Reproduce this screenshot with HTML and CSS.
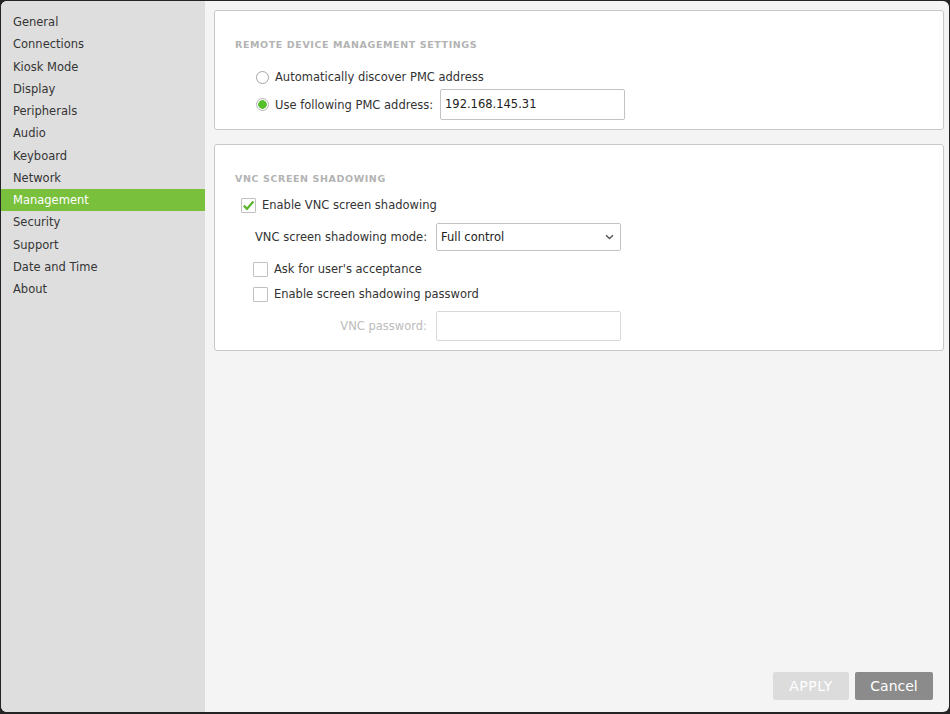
FILE: index.html
```html
<!DOCTYPE html>
<html>
<head>
<meta charset="utf-8">
<link rel="stylesheet" href="styles.css">
</head>
<body>
<div class="window">
  <nav class="sidebar">
    <div class="nav-item">General</div>
    <div class="nav-item">Connections</div>
    <div class="nav-item">Kiosk Mode</div>
    <div class="nav-item">Display</div>
    <div class="nav-item">Peripherals</div>
    <div class="nav-item">Audio</div>
    <div class="nav-item">Keyboard</div>
    <div class="nav-item">Network</div>
    <div class="nav-item active">Management</div>
    <div class="nav-item">Security</div>
    <div class="nav-item">Support</div>
    <div class="nav-item">Date and Time</div>
    <div class="nav-item">About</div>
  </nav>
  <main class="main">
    <section class="panel panel-pmc">
      <h2 class="panel-title">REMOTE DEVICE MANAGEMENT SETTINGS</h2>
      <div class="radio-row">
        <span class="radio"></span>
        <span class="label">Automatically discover PMC address</span>
      </div>
      <div class="radio-row radio-row-input">
        <span class="radio checked"></span>
        <span class="label label-fixed">Use following PMC address:</span>
        <div class="text-input">192.168.145.31</div>
      </div>
    </section>

    <section class="panel panel-vnc">
      <h2 class="panel-title">VNC SCREEN SHADOWING</h2>
      <div class="check-row check-row-main">
        <span class="checkbox checked">
          <svg width="13" height="13" viewBox="0 0 13 13"><path d="M1.8 6.6 L5 9.8 L11.4 2.6" fill="none" stroke="#5bb52f" stroke-width="2.2"/></svg>
        </span>
        <span class="label">Enable VNC screen shadowing</span>
      </div>
      <div class="field-grid field-grid-mode">
        <span class="field-label">VNC screen shadowing mode:</span>
        <div class="select">
          <span>Full control</span>
          <svg class="chevron" width="9" height="6" viewBox="0 0 9 6"><path d="M1 1.2 L4.5 4.6 L8 1.2" fill="none" stroke="#555" stroke-width="1.4"/></svg>
        </div>
      </div>
      <div class="check-row check-row-sub">
        <span class="checkbox"></span>
        <span class="label">Ask for user's acceptance</span>
      </div>
      <div class="check-row check-row-sub check-row-tight">
        <span class="checkbox"></span>
        <span class="label">Enable screen shadowing password</span>
      </div>
      <div class="field-grid field-grid-pass">
        <span class="field-label disabled">VNC password:</span>
        <div class="text-input disabled-input"></div>
      </div>
    </section>

    <div class="spacer"></div>
    <div class="actions">
      <button class="btn btn-apply">APPLY</button>
      <button class="btn btn-cancel">Cancel</button>
    </div>
  </main>
</div>
</body>
</html>
```
FILE: styles.css
```css
html, body {
  margin: 0;
  padding: 0;
  background: #242424;
  width: 950px;
  height: 714px;
  overflow: hidden;
}
body {
  font-family: "DejaVu Sans", "Liberation Sans", sans-serif;
  font-size: 11.5px;
  color: #333;
}
.window {
  margin: 1px 1px 2px 1px;
  height: 711px;
  width: 948px;
  border-radius: 6px;
  overflow: hidden;
  display: flex;
  background: #f4f4f4;
}
.sidebar {
  width: 204px;
  background: #dedede;
  padding-top: 10px;
  box-sizing: border-box;
  flex-shrink: 0;
}
.nav-item {
  height: 22.25px;
  line-height: 22px;
  padding-left: 12px;
  color: #353535;
}
.nav-item.active {
  background: #79c03d;
  color: #fff;
}
.main {
  flex: 1;
  display: flex;
  flex-direction: column;
  padding: 9px 5px 0 9px;
}
.panel {
  background: #fff;
  border: 1px solid #c8c8c8;
  border-radius: 3px;
  padding: 28px 20px 8px 20px;
}
.panel-pmc {
  height: 120px;
  box-sizing: border-box;
  padding-bottom: 9px;
}
.panel-vnc {
  margin-top: 14px;
  height: 207px;
  box-sizing: border-box;
}
.panel-title {
  margin: 0;
  font-size: 9.5px;
  line-height: 12px;
  font-weight: bold;
  letter-spacing: 0.6px;
  color: #b3b3b3;
}
.radio-row {
  display: flex;
  align-items: center;
  height: 20px;
  margin-top: 16px;
  padding-left: 21px;
}
.radio-row-input {
  height: 31px;
  margin-top: 2px;
}
.radio {
  width: 11px;
  height: 11px;
  border: 1px solid #a5a5a5;
  border-radius: 50%;
  background: #fff;
  margin-right: 6px;
  box-sizing: content-box;
  flex-shrink: 0;
}
.radio.checked {
  border-color: #b5b5b5;
  background: radial-gradient(circle, #56c02c 0, #56c02c 4px, #fff 4.6px);
}
.label-fixed {
  width: 158px;
  white-space: nowrap;
}
.text-input {
  width: 185px;
  height: 31px;
  box-sizing: border-box;
  border: 1px solid #c3c3c3;
  border-radius: 2px;
  padding: 0 4px;
  line-height: 29px;
  color: #222;
  margin-left: 7px;
  background: #fff;
}
.check-row {
  display: flex;
  align-items: center;
  height: 20px;
}
.check-row-main {
  margin-top: 10px;
  padding-left: 6px;
}
.check-row-sub {
  padding-left: 18px;
  margin-top: 8px;
}
.check-row-tight {
  margin-top: 5px;
}
.checkbox {
  width: 15px;
  height: 15px;
  box-sizing: border-box;
  border: 1px solid #c0c0c0;
  border-radius: 1px;
  background: #fff;
  margin-right: 6px;
  display: flex;
  align-items: center;
  justify-content: center;
  flex-shrink: 0;
}
.field-grid {
  display: grid;
  grid-template-columns: 172px 185px;
  column-gap: 9px;
  align-items: center;
  padding-left: 20px;
}
.field-grid-mode {
  margin-top: 8px;
}
.field-grid-pass {
  margin-top: 7px;
}
.field-label {
  white-space: nowrap;
}
.field-label.disabled {
  text-align: right;
  color: #bcbcbc;
}
.select {
  height: 28px;
  box-sizing: border-box;
  border: 1px solid #c3c3c3;
  border-radius: 2px;
  display: flex;
  align-items: center;
  justify-content: space-between;
  padding: 0 6px 0 4px;
  color: #222;
}
.chevron {
  display: block;
}
.disabled-input {
  margin-left: 0;
  height: 30px;
  border-color: #d8d8d8;
}
.spacer {
  flex: 1;
}
.actions {
  display: flex;
  justify-content: flex-end;
  gap: 6px;
  margin: 0 11px 12px 0;
}
.btn {
  height: 28px;
  border: none;
  border-radius: 2px;
  font-family: "DejaVu Sans", "Liberation Sans", sans-serif;
  font-size: 14px;
  color: #fff;
  padding: 0;
}
.btn-apply {
  width: 76px;
  background: #dcdcdc;
  letter-spacing: 0.5px;
}
.btn-cancel {
  width: 78px;
  background: #8b8b8b;
}
```
